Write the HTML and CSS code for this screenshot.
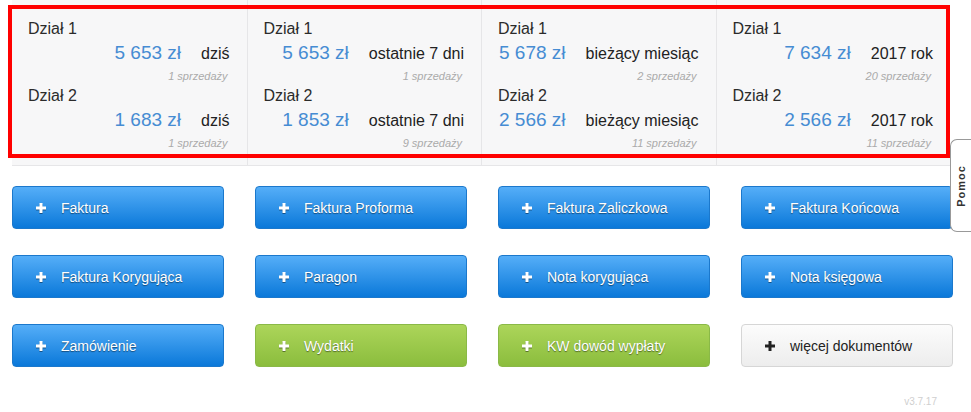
FILE: index.html
```html
<!DOCTYPE html>
<html lang="pl">
<head>
    <meta charset="UTF-8">
    <meta name="viewport" content="width=device-width, initial-scale=1.0">
    <title>Pulpit</title>
    <link rel="stylesheet" href="styles.css">
</head>
<body>
    <div class="page">
        <!-- Sales summary -->
        <div class="stats">
            <div class="stat-col">
                <div class="dept">Dział 1</div>
                <div class="amount-row"><span class="amount">5 653 zł</span><span class="period">dziś</span></div>
                <div class="sales">1 sprzedaży</div>
                <div class="dept">Dział 2</div>
                <div class="amount-row"><span class="amount">1 683 zł</span><span class="period">dziś</span></div>
                <div class="sales">1 sprzedaży</div>
            </div>
            <div class="stat-col">
                <div class="dept">Dział 1</div>
                <div class="amount-row"><span class="amount">5 653 zł</span><span class="period">ostatnie 7 dni</span></div>
                <div class="sales">1 sprzedaży</div>
                <div class="dept">Dział 2</div>
                <div class="amount-row"><span class="amount">1 853 zł</span><span class="period">ostatnie 7 dni</span></div>
                <div class="sales">9 sprzedaży</div>
            </div>
            <div class="stat-col">
                <div class="dept">Dział 1</div>
                <div class="amount-row"><span class="amount">5 678 zł</span><span class="period">bieżący miesiąc</span></div>
                <div class="sales">2 sprzedaży</div>
                <div class="dept">Dział 2</div>
                <div class="amount-row"><span class="amount">2 566 zł</span><span class="period">bieżący miesiąc</span></div>
                <div class="sales">11 sprzedaży</div>
            </div>
            <div class="stat-col">
                <div class="dept">Dział 1</div>
                <div class="amount-row"><span class="amount">7 634 zł</span><span class="period">2017 rok</span></div>
                <div class="sales">20 sprzedaży</div>
                <div class="dept">Dział 2</div>
                <div class="amount-row"><span class="amount">2 566 zł</span><span class="period">2017 rok</span></div>
                <div class="sales">11 sprzedaży</div>
            </div>
        </div>

        <!-- Document buttons -->
        <div class="actions">
            <a class="btn btn-blue" href="#"><svg class="plus" viewBox="0 0 10 10"><rect x="3.5" y="0" width="3" height="10"/><rect x="0" y="3.5" width="10" height="3"/></svg>Faktura</a>
            <a class="btn btn-blue" href="#"><svg class="plus" viewBox="0 0 10 10"><rect x="3.5" y="0" width="3" height="10"/><rect x="0" y="3.5" width="10" height="3"/></svg>Faktura Proforma</a>
            <a class="btn btn-blue" href="#"><svg class="plus" viewBox="0 0 10 10"><rect x="3.5" y="0" width="3" height="10"/><rect x="0" y="3.5" width="10" height="3"/></svg>Faktura Zaliczkowa</a>
            <a class="btn btn-blue" href="#"><svg class="plus" viewBox="0 0 10 10"><rect x="3.5" y="0" width="3" height="10"/><rect x="0" y="3.5" width="10" height="3"/></svg>Faktura Końcowa</a>

            <a class="btn btn-blue" href="#"><svg class="plus" viewBox="0 0 10 10"><rect x="3.5" y="0" width="3" height="10"/><rect x="0" y="3.5" width="10" height="3"/></svg>Faktura Korygująca</a>
            <a class="btn btn-blue" href="#"><svg class="plus" viewBox="0 0 10 10"><rect x="3.5" y="0" width="3" height="10"/><rect x="0" y="3.5" width="10" height="3"/></svg>Paragon</a>
            <a class="btn btn-blue" href="#"><svg class="plus" viewBox="0 0 10 10"><rect x="3.5" y="0" width="3" height="10"/><rect x="0" y="3.5" width="10" height="3"/></svg>Nota korygująca</a>
            <a class="btn btn-blue" href="#"><svg class="plus" viewBox="0 0 10 10"><rect x="3.5" y="0" width="3" height="10"/><rect x="0" y="3.5" width="10" height="3"/></svg>Nota księgowa</a>

            <a class="btn btn-blue" href="#"><svg class="plus" viewBox="0 0 10 10"><rect x="3.5" y="0" width="3" height="10"/><rect x="0" y="3.5" width="10" height="3"/></svg>Zamówienie</a>
            <a class="btn btn-green" href="#"><svg class="plus" viewBox="0 0 10 10"><rect x="3.5" y="0" width="3" height="10"/><rect x="0" y="3.5" width="10" height="3"/></svg>Wydatki</a>
            <a class="btn btn-green" href="#"><svg class="plus" viewBox="0 0 10 10"><rect x="3.5" y="0" width="3" height="10"/><rect x="0" y="3.5" width="10" height="3"/></svg>KW dowód wypłaty</a>
            <a class="btn btn-white" href="#"><svg class="plus" viewBox="0 0 10 10"><rect x="3.5" y="0" width="3" height="10"/><rect x="0" y="3.5" width="10" height="3"/></svg>więcej dokumentów</a>
        </div>

        <div class="version">v3.7.17</div>
    </div>

    <!-- Highlight frame -->
    <div class="highlight"></div>

    <!-- Help tab -->
    <div class="help-tab"><span>Pomoc</span></div>
</body>
</html>
```

FILE: styles.css
```css
/* Base Styles */
html, body {
    margin: 0;
    padding: 0;
    background: #fff;
    font-family: 'Liberation Sans', Arial, sans-serif;
    color: #222;
    overflow: hidden;
}

.page {
    padding-left: 12px;
    width: 940px;
}

/* Sales summary */
.stats {
    display: grid;
    grid-template-columns: repeat(4, 1fr);
    width: 938px;
    background: #f7f7f8;
    border-bottom: 1px solid #e6e6e8;
}

.stat-col {
    padding: 19px 0 15px;
    border-left: 1px solid #e6e6e8;
}

.stat-col:first-child {
    border-left: none;
}

.dept {
    padding-left: 16px;
    font-size: 16px;
    line-height: 20px;
    color: #2b2b2b;
}

.dept + .amount-row {
    margin-top: 2px;
}

.sales + .dept {
    margin-top: 3px;
}

.amount-row {
    display: flex;
    justify-content: flex-end;
    align-items: baseline;
    gap: 20px;
    padding-right: 17px;
    line-height: 24px;
}

.amount {
    font-size: 19px;
    color: #468cd3;
}

.period {
    font-size: 16px;
    color: #222;
}

.sales {
    margin-top: 3px;
    padding-right: 19px;
    text-align: right;
    font-size: 11px;
    line-height: 14px;
    font-style: italic;
    color: #aaa;
}

/* Document buttons */
.actions {
    display: grid;
    grid-template-columns: repeat(4, 212px);
    column-gap: 31px;
    row-gap: 26px;
    margin-top: 20px;
}

.btn {
    display: flex;
    align-items: center;
    height: 43px;
    box-sizing: border-box;
    padding-left: 23px;
    border-radius: 4px;
    font-size: 14px;
    text-decoration: none;
    color: #fff;
    text-shadow: 0 1px 1px rgba(0, 0, 0, 0.45);
}

.plus {
    width: 10px;
    height: 10px;
    margin-right: 15px;
    fill: #fff;
    filter: drop-shadow(0 1px 0.5px rgba(0, 0, 0, 0.4));
}

.btn-blue {
    background: linear-gradient(#55aef8, #0a78d9);
    border: 1px solid #1b78cc;
}

.btn-green {
    background: linear-gradient(#acd55a, #8bbd3d);
    border: 1px solid #8ab947;
}

.btn-white {
    background: linear-gradient(#fcfcfc, #ededed);
    border: 1px solid #d6d6d6;
    color: #222;
    text-shadow: none;
}

.btn-white .plus {
    fill: #222;
    filter: none;
}

.version {
    margin-top: 28px;
    padding-right: 15px;
    text-align: right;
    font-size: 10px;
    line-height: 14px;
    color: #cfcfcf;
}

/* Red frame drawn over the summary */
.highlight {
    position: absolute;
    left: 8px;
    top: 5px;
    width: 942px;
    height: 153px;
    box-sizing: border-box;
    border: 4px solid #f00;
}

/* Help tab */
.help-tab {
    position: absolute;
    right: 0;
    top: 139px;
    width: 20px;
    height: 91px;
    background: #fff;
    border: 1px solid #999;
    border-right: none;
    border-radius: 7px 0 0 7px;
    display: flex;
    align-items: center;
    justify-content: center;
}

.help-tab span {
    transform: rotate(-90deg);
    font-size: 11px;
    font-weight: bold;
    letter-spacing: 1px;
    color: #333;
    white-space: nowrap;
}
```
